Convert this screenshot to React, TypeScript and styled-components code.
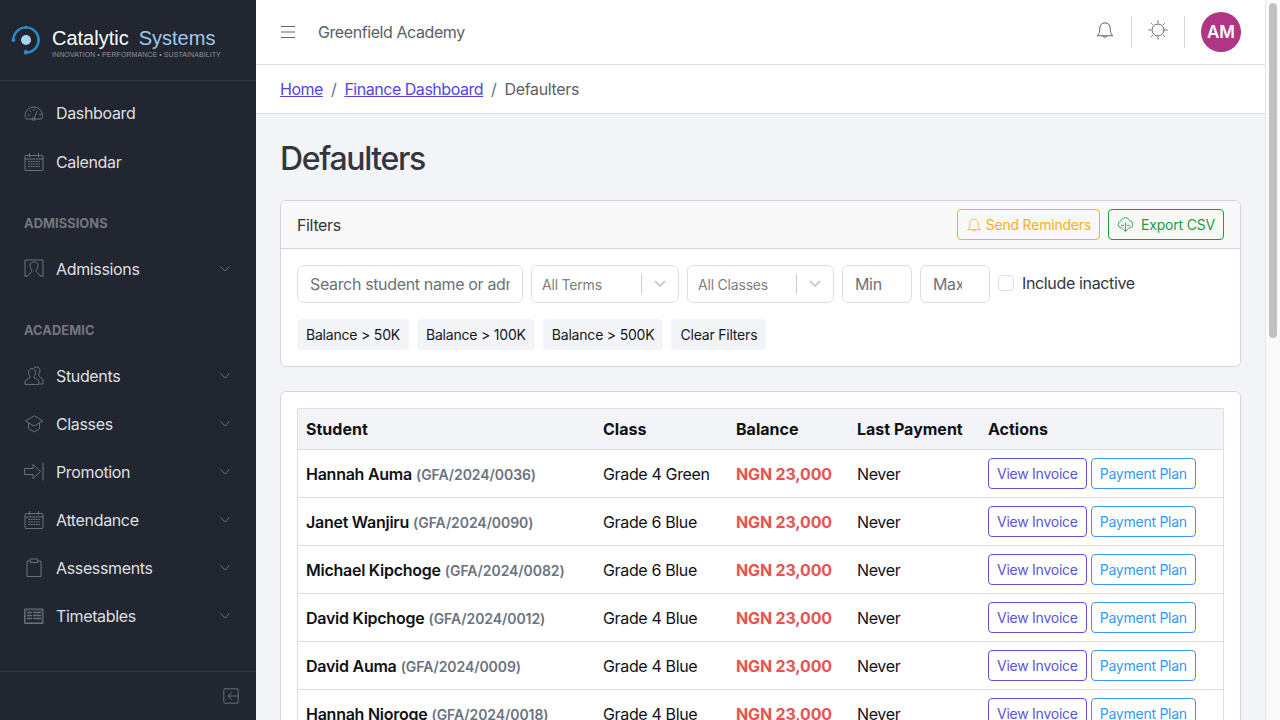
import React from "react";
import styled, { createGlobalStyle } from "styled-components";

const Global = createGlobalStyle`
  html, body { margin: 0; padding: 0; height: 100%; overflow: hidden; }
  body { font-family: Inter, "Liberation Sans", sans-serif; font-size: 16px; letter-spacing: -0.35px; color: #252b36; background: #f3f4f7; }
  * { box-sizing: border-box; }
`;

const Shell = styled.div`display: flex; height: 100vh; width: 1280px;`;

const Sidebar = styled.aside`
  width: 256px; flex: none; height: 100vh; background: #212631; display: flex; flex-direction: column;
`;
const Brand = styled.div`
  height: 81px; flex: none; border-bottom: 1px solid #323a49; display: flex; align-items: flex-start; padding: 25px 0 0 11px; gap: 11px;
`;
const BrandText = styled.div`display: flex; flex-direction: column; padding-top: 1px;`;
const BrandName = styled.div`
  font-family: "Liberation Sans", Arial, sans-serif; font-size: 20px; letter-spacing: 0; line-height: 24px; color: #fff; white-space: pre; height: 24px;
`;
const BrandAccent = styled.span`color: #9ccbee; margin-left: 10px;`;
const BrandTag = styled.div`
  font-family: "Liberation Sans", Arial, sans-serif; font-size: 7px; line-height: 8px; color: #90939a; white-space: nowrap; margin-top: 1px; letter-spacing: .08px;
`;
const Nav = styled.nav`flex: 1; padding-top: 8px; display: flex; flex-direction: column;`;
const NavItem = styled.div<{ $gap?: boolean }>`
  height: 48px; flex: none; display: flex; align-items: center; padding: 0 26px 0 24px; gap: 12px; color: rgba(255,255,255,.87); margin-bottom: ${p => (p.$gap ? "1px" : "0")};
  svg { flex: none; }
`;
const NavLabel = styled.span`flex: 1; line-height: 24px;`;
const NavTitle = styled.div`
  margin-top: 16px; height: 43px; flex: none; padding: 0 24px; display: flex; align-items: center; font-size: 12.8px; font-weight: 700; letter-spacing: .1px; color: rgba(255,255,255,.38);
`;
const SideFooter = styled.div`
  height: 49px; flex: none; border-top: 1px solid #323a49; display: flex; align-items: center; justify-content: flex-end; padding: 0 17px 0 0;
`;

const Main = styled.main`
  flex: 1; min-width: 0; height: 100vh; overflow: hidden; background: #f3f4f7;
`;
const ScrollRail = styled.div`
  width: 15px; flex: none; height: 100vh; background: #fafafa; border-left: 1px solid #e8e8e8; padding: 3px 3px 0 3px;
`;
const ScrollThumb = styled.div`width: 8px; height: 335px; border-radius: 4px; background: #c1c1c1;`;
const Header = styled.header`
  height: 65px; background: #fff; border-bottom: 1px solid #dbdfe6; display: flex; align-items: center; padding: 0 24px;
`;
const Burger = styled.span`display: flex; margin-right: 22px; color: #5f6368;`;
const SchoolName = styled.span`flex: 1; color: #5c6066; line-height: 24px; letter-spacing: -0.42px;`;
const HeaderIcon = styled.span`width: 52px; display: flex; justify-content: center; color: #5f6368; margin-top: -4px;`;
const HeaderRule = styled.span`width: 1px; height: 32px; background: #d6d8dc;`;
const Avatar = styled.span`
  width: 40px; height: 40px; border-radius: 50%; background: #b03585; color: #fff; font-weight: 600; font-size: 17px; letter-spacing: -0.1px; display: flex; align-items: center; justify-content: center; margin-left: 16px;
`;
const Crumbs = styled.div`
  height: 49px; background: #fff; border-bottom: 1px solid #dbdfe6; display: flex; align-items: center; padding: 0 24px; color: #5c6066;
`;
const CrumbLink = styled.a`color: #4f46e5; text-decoration: underline; letter-spacing: -0.47px;`;
const CrumbSep = styled.span`padding: 0 8px; color: #6a6e75;`;
const Content = styled.div`padding: 24px;`;
const Title = styled.h1`margin: 0 0 20px; font-size: 32px; line-height: 42.4px; font-weight: 500; letter-spacing: -1.35px; color: #32363e;`;

const Card = styled.section`
  background: #fff; border: 1px solid #d3d5d9; border-radius: 6px; margin-bottom: 24px; overflow: hidden;
`;
const CardHead = styled.div`
  height: 48px; background: #f8f8f9; border-bottom: 1px solid #d3d5d9; display: flex; align-items: center; justify-content: space-between; padding: 0 16px; color: #32363e;
`;
const HeadActions = styled.div`display: flex; gap: 8px;`;
const ToneButton = styled.button<{ $tone: string; $gap: number }>`
  height: 31px; padding: 0 8px; background: transparent; border: 1px solid ${p => p.$tone}; color: ${p => p.$tone}; border-radius: 4px;
  font: 14px/21px Inter, sans-serif; letter-spacing: -0.2px; display: inline-flex; align-items: center; gap: ${p => p.$gap}px; white-space: nowrap;
`;
const FilterBody = styled.div`padding: 16px; display: flex; flex-direction: column; gap: 16px; height: 117px;`;
const FilterRow = styled.div`display: flex; align-items: center; gap: 8px;`;
const TextInput = styled.input<{ $w: number }>`
  width: ${p => p.$w}px; height: 38px; border: 1px solid #dbdfe6; border-radius: 6px; padding: 0 12px; font: 16px Inter, sans-serif; letter-spacing: -0.35px; color: #252b36; background: #fff; outline: none;
  &::placeholder { color: #6d7178; opacity: 1; }
  &[type=number] { appearance: textfield; }
`;
const SelectBox = styled.div<{ $w: number }>`
  width: ${p => p.$w}px; height: 38px; border: 1px solid #dbdfe6; border-radius: 6px; display: flex; align-items: center; padding-left: 10px; font-size: 14px; letter-spacing: -0.2px; color: #808080; background: #fff;
`;
const SelectValue = styled.span`flex: 1;`;
const SelectRule = styled.span`width: 1px; height: 20px; background: #ccc;`;
const SelectArrow = styled.span`width: 36px; display: flex; justify-content: center; color: #ccc;`;
const CheckBox = styled.input`
  appearance: none; width: 16px; height: 16px; margin: 0; border: 1px solid #dbdfe6; border-radius: 4px; background: #fff;
`;
const CheckLabel = styled.label`color: #32363e; line-height: 24px;`;
const CheckWrap = styled.div`display: flex; align-items: center; gap: 8px; margin-top: -2px;`;
const ChipRow = styled.div`display: flex; gap: 8px;`;
const Chip = styled.button`
  height: 31px; padding: 0 8px; border: 1px solid #f3f4f7; border-radius: 4px; background: #f3f4f7; color: #15171c; font: 14px Inter, sans-serif; letter-spacing: -0.2px; white-space: nowrap;
`;
const TableBody = styled.div`padding: 16px;`;
const Table = styled.table`
  width: 100%; border-collapse: collapse; table-layout: fixed; border: 1px solid #dbdfe6; color: #0f1115;
`;
const Th = styled.th`
  height: 41px; padding: 0 8px; text-align: left; font-weight: 700; letter-spacing: 0; background: #f3f4f7; border-bottom: 1px solid #dbdfe6;
`;
const Td = styled.td`height: 48px; padding: 0 8px; border-bottom: 1px solid #dbdfe6; white-space: nowrap;`;
const StudentName = styled.strong`font-weight: 600; letter-spacing: -0.26px;`;
const StudentCode = styled.span`font-size: 14px; font-weight: 600; letter-spacing: -0.07px; color: #6b7280;`;
const Balance = styled.span`font-weight: 700; letter-spacing: -0.15px; color: #e55353;`;
const RowActions = styled.div`display: flex; gap: 4px;`;
const RowButton = styled.button<{ $tone: string }>`
  height: 31px; padding: 0 8px; background: #fff; border: 1px solid ${p => p.$tone}; color: ${p => p.$tone}; border-radius: 4px; font: 14px Inter, sans-serif; letter-spacing: -0.25px; white-space: nowrap;
`;

const Ico: React.FC<{ size?: number; color?: string; sw?: number; children: React.ReactNode }> = ({ size = 20, color = "#6c7078", sw = 1, children }) => (
  <svg width={size} height={size} viewBox="0 0 20 20" fill="none" stroke={color} strokeWidth={sw} strokeLinecap="round" strokeLinejoin="round">{children}</svg>
);

const Logo = () => (
  <svg width="30" height="30" viewBox="0 0 30 30" fill="none">
    <path d="M2.400 15A12.600 12.600 0 1 1 15 27.600" stroke="#2e8bcb" strokeWidth="2.400" />
    <circle cx="15" cy="15" r="5" fill="#a8d4f2" />
    <circle cx="2.400" cy="15" r="2" fill="#2e8bcb" />
    <circle cx="15" cy="2.400" r="1.700" fill="#2e8bcb" />
    <circle cx="27.600" cy="15" r="1.700" fill="#2e8bcb" />
    <circle cx="15" cy="27.300" r="2.200" fill="#2e8bcb" />
  </svg>
);

const Speedo = () => <Ico><path d="M3 16h14.500a8 8 0 0 0 1-3.500A8.700 8.700 0 0 0 10 4a8.700 8.700 0 0 0-9 8.500c0 1.300.3 2.500 1 3.500z" /><circle cx="9.700" cy="16" r="1.500" /><path d="M10.500 14.500 13 8M4 12h1.500M6 8l1 1M10 6v1.500M15.500 11.500H17" /></Ico>;
const CalIcon = () => <Ico><rect x="1" y="3.500" width="18" height="15" rx="1" /><path d="M1 7h18M5.500 1.500v3.500M14.500 1.500v3.500" /><path d="M4.500 9.500h11M4.500 12h11M4.500 14.500h11" strokeDasharray="1.200 1.400" /></Ico>;
const Person = () => <Ico><path d="M1 17V1h18v16" /><path d="M1 17h3c.5-2.500 3.500-3 4-5 .3-.8-2-2.500-2-5.500C6 4 8 3 10 3s4 1 4 3.500c0 3-2.300 4.700-2 5.500.5 2 3.500 2.500 4 5h3" /></Ico>;
const People = () => <Ico><path d="M1 18v-2c0-3 4-3 5-4.500.5-.8-1.500-2.500-1.500-5C4.500 4 6 2.500 8 2.500s3.500 1.500 3.500 4c0 2.500-2 4.200-1.500 5 1 1.500 5 1.500 5 4.500v2z" /><path d="M10 2c.7-.6 1.500-1 2.500-1 2 0 3.500 1.500 3.500 4 0 2.500-2 4.200-1.500 5 1 1.500 4.500 1.500 4.500 4.500V18h-3" /></Ico>;
const Grad = () => <Ico><path d="M10 2 1.500 7 10 12l8.500-5z" /><path d="M4.500 9.500v5L10 18l5.500-3.500v-5" /></Ico>;
const Promo = () => <Ico><path d="M1 6.500h8v-4l7.500 7-7.500 7v-4H1z" /><path d="M19 1v17" /></Ico>;
const Clip = () => <Ico><path d="M6.500 3H3v15.500h14V3h-3.500" /><rect x="6.500" y="1" width="7" height="3.500" /></Ico>;
const TimeT = () => <Ico><rect x="1" y="3" width="18" height="14.500" /><rect x="2" y="4" width="16" height="12.500" strokeOpacity=".6" /><path d="M3.500 6.500h4M3.500 9.500h4M3.500 12.500h4M9.500 6.500h7M9.500 9.500h7M9.500 12.500h7" strokeWidth="1.300" /></Ico>;
const Chevron = () => <svg width="10" height="6" viewBox="0 0 10 6" fill="none" stroke="#6c7078" strokeWidth="1"><path d="M.5.5 5 5 9.500.5" /></svg>;
const BellShape = () => (
  <>
    <path d="M2.500 15.500c1.800-1.700 2.300-3.500 2.300-7.500a5.200 5.200 0 0 1 10.400 0c0 4 .5 5.800 2.300 7.500z" />
    <path d="M7.800 15.700a2.300 2.300 0 0 0 4.400 0" />
  </>
);

const navGroups: { title?: string; items: [string, React.FC, boolean][] }[] = [
  { items: [["Dashboard", Speedo, false], ["Calendar", CalIcon, false]] },
  { title: "ADMISSIONS", items: [["Admissions", Person, true]] },
  { title: "ACADEMIC", items: [["Students", People, true], ["Classes", Grad, true], ["Promotion", Promo, true], ["Attendance", CalIcon, true], ["Assessments", Clip, true], ["Timetables", TimeT, true]] },
];

const rows: [string, string, string][] = [
  ["Hannah Auma", "GFA/2024/0036", "Grade 4 Green"],
  ["Janet Wanjiru", "GFA/2024/0090", "Grade 6 Blue"],
  ["Michael Kipchoge", "GFA/2024/0082", "Grade 6 Blue"],
  ["David Kipchoge", "GFA/2024/0012", "Grade 4 Blue"],
  ["David Auma", "GFA/2024/0009", "Grade 4 Blue"],
  ["Hannah Njoroge", "GFA/2024/0018", "Grade 4 Blue"],
];

const SelectField: React.FC<{ w: number; label: string }> = ({ w, label }) => (
  <SelectBox $w={w}>
    <SelectValue>{label}</SelectValue>
    <SelectRule />
    <SelectArrow>
      <svg width="14" height="10" viewBox="0 0 14 10" fill="none" stroke="currentColor" strokeWidth="2"><path d="M2 2l5 5 5-5" /></svg>
    </SelectArrow>
  </SelectBox>
);

export default function App() {
  return (
    <Shell>
      <Global />
      <Sidebar>
        <Brand>
          <Logo />
          <BrandText>
            <BrandName>Catalytic<BrandAccent>Systems</BrandAccent></BrandName>
            <BrandTag>INNOVATION • PERFORMANCE • SUSTAINABILITY</BrandTag>
          </BrandText>
        </Brand>
        <Nav>
          {navGroups.map((g, i) => (
            <React.Fragment key={i}>
              {g.title && <NavTitle>{g.title}</NavTitle>}
              {g.items.map(([label, Icon, more]) => (
                <NavItem key={label} $gap={label === "Dashboard"}>
                  <Icon />
                  <NavLabel>{label}</NavLabel>
                  {more && <Chevron />}
                </NavItem>
              ))}
            </React.Fragment>
          ))}
        </Nav>
        <SideFooter>
          <Ico size={16} color="#6c7078" sw={1.2}><rect x="1" y="1" width="18" height="18" rx="1.500" /><path d="M19 10H6.500M11 5.500 6.500 10l4.500 4.500" /></Ico>
        </SideFooter>
      </Sidebar>
      <Main>
        <Header>
          <Burger>
            <svg width="16" height="14" viewBox="0 0 16 14" fill="none" stroke="currentColor" strokeWidth="1"><path d="M1 1.500h14M1 7h14M1 12.500h14" /></svg>
          </Burger>
          <SchoolName>Greenfield Academy</SchoolName>
          <HeaderIcon>
            <Ico color="#5f6368"><BellShape /></Ico>
          </HeaderIcon>
          <HeaderRule />
          <HeaderIcon>
            <Ico color="#5f6368"><circle cx="10" cy="10" r="6" /><path d="M10 .8v1.700M10 17.500v1.700M.8 10h1.700M17.500 10h1.700M3.500 3.500l1 1M15.500 15.500l1 1M3.500 16.500l1-1M15.500 4.500l1-1" /></Ico>
          </HeaderIcon>
          <HeaderRule />
          <Avatar>AM</Avatar>
        </Header>
        <Crumbs>
          <CrumbLink>Home</CrumbLink><CrumbSep>/</CrumbSep><CrumbLink>Finance Dashboard</CrumbLink><CrumbSep>/</CrumbSep><span>Defaulters</span>
        </Crumbs>
        <Content>
          <Title>Defaulters</Title>
          <Card>
            <CardHead>
              <span>Filters</span>
              <HeadActions>
                <ToneButton $tone="#f9b115" $gap={4}>
                  <Ico size={16} color="#f9b115"><BellShape /></Ico>
                  Send Reminders
                </ToneButton>
                <ToneButton $tone="#1b9e3e" $gap={7}>
                  <Ico size={17} color="#1b9e3e"><path d="M6 14H5a4 4 0 0 1-.5-7.900A5.500 5.500 0 0 1 15 5.500 4.300 4.300 0 0 1 15 14h-1" /><path d="M10 8v10M7 15l3 3 3-3M5 11h3M12 11h3" /></Ico>
                  Export CSV
                </ToneButton>
              </HeadActions>
            </CardHead>
            <FilterBody>
              <FilterRow>
                <TextInput $w={226} placeholder="Search student name or admission number" />
                <SelectField w={148} label="All Terms" />
                <SelectField w={147} label="All Classes" />
                <TextInput $w={70} type="number" placeholder="Min" />
                <TextInput $w={70} type="number" placeholder="Max" />
                <CheckWrap>
                  <CheckBox type="checkbox" />
                  <CheckLabel>Include inactive</CheckLabel>
                </CheckWrap>
              </FilterRow>
              <ChipRow>
                <Chip>Balance &gt; 50K</Chip>
                <Chip>Balance &gt; 100K</Chip>
                <Chip>Balance &gt; 500K</Chip>
                <Chip>Clear Filters</Chip>
              </ChipRow>
            </FilterBody>
          </Card>
          <Card>
            <TableBody>
              <Table>
                <colgroup>
                  <col width="297.5" /><col width="133" /><col width="121" /><col width="131" /><col />
                </colgroup>
                <thead>
                  <tr><Th>Student</Th><Th>Class</Th><Th>Balance</Th><Th>Last Payment</Th><Th>Actions</Th></tr>
                </thead>
                <tbody>
                  {rows.map(([name, code, cls]) => (
                    <tr key={code}>
                      <Td><StudentName>{name}</StudentName> <StudentCode>({code})</StudentCode></Td>
                      <Td>{cls}</Td>
                      <Td><Balance>NGN 23,000</Balance></Td>
                      <Td>Never</Td>
                      <Td>
                        <RowActions>
                          <RowButton $tone="#5856d6">View Invoice</RowButton>
                          <RowButton $tone="#3399ff">Payment Plan</RowButton>
                        </RowActions>
                      </Td>
                    </tr>
                  ))}
                </tbody>
              </Table>
            </TableBody>
          </Card>
        </Content>
      </Main>
      <ScrollRail><ScrollThumb /></ScrollRail>
    </Shell>
  );
}
